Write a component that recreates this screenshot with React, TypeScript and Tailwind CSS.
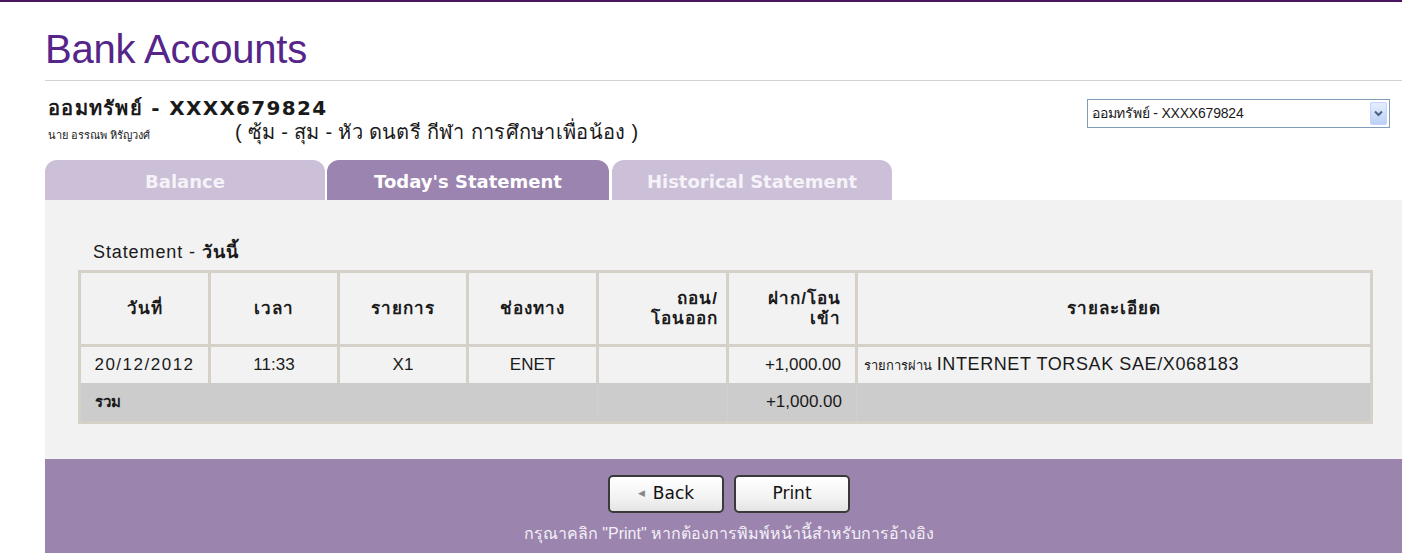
import React from "react";

const thai = "font-['Liberation_Sans','Noto_Sans',sans-serif]";

const rows = [
  {
    date: "20/12/2012",
    time: "11:33",
    code: "X1",
    channel: "ENET",
    withdraw: "",
    deposit: "+1,000.00",
    detail: "รายการผ่าน",
    detailEn: "INTERNET TORSAK SAE/X068183",
  },
];

export default function App() {
  return (
    <div className={`min-h-[553px] w-full overflow-hidden bg-white border-t-2 border-[#4a1560] text-[#1a1a1a] ${thai}`}>
      <div className="pl-[45px]">
        {/* page title */}
        <h1 className="h-[78px] pt-[25px] text-[40px] leading-[44px] tracking-[-0.2px] text-[#55258a] font-['Liberation_Sans',sans-serif]">
          Bank Accounts
        </h1>
        <div className="border-t border-[#d2d2d2]" />

        <div className="w-[1368px]">
          {/* account header */}
          <div className="flex justify-between items-start pt-[16px] h-[79px]">
            <div className="pl-[3px]">
              <div className="text-[20px] leading-[23px] font-bold font-['DejaVu_Sans',sans-serif] tracking-[1.3px]">
                ออมทรัพย์ - XXXX679824
              </div>
              <div className="flex items-baseline mt-[1px]">
                <span className="text-[11px] leading-[20px] w-[187px]">นาย อรรณพ หิรัญวงศ์</span>
                <span className="text-[20px] leading-[22px] tracking-[0.3px]">( ซุ้ม - สุม - หัว ดนตรี กีฬา การศึกษาเพื่อน้อง )</span>
              </div>
            </div>

            <div className="mr-[23px] mt-[2px] w-[303px] h-[29px] border border-[#7f9db9] bg-white flex items-center justify-between pl-[4px] pr-[2px]">
              <span className="text-[14px] tracking-[-0.2px]">ออมทรัพย์ - XXXX679824</span>
              <div className="w-[17px] h-[23px] rounded-[2px] border border-[#c3d3fd] bg-[linear-gradient(#e6eefc,#bcd0f5)] flex items-center justify-center">
                <svg width="9" height="7" viewBox="0 0 9 7">
                  <path d="M1 1.5 L4.5 5 L8 1.5" stroke="#4d6185" strokeWidth="2" fill="none" />
                </svg>
              </div>
            </div>
          </div>

          {/* tabs */}
          <div className="flex gap-[2px] h-[40px] font-['DejaVu_Sans',sans-serif] font-bold text-[18px]">
            <div className="w-[280px] pt-[2px] rounded-t-[12px] bg-[#cbc0d8] text-[#f5f2f8] flex items-center justify-center">
              Balance
            </div>
            <div className="w-[282px] pt-[2px] rounded-t-[12px] bg-[#9b84b0] text-white flex items-center justify-center">
              Today's Statement
            </div>
            <div className="ml-[1px] w-[280px] pt-[2px] rounded-t-[12px] bg-[#cbc0d8] text-[#f5f2f8] flex items-center justify-center">
              Historical Statement
            </div>
          </div>

          {/* panel */}
          <div className="bg-[#f2f2f2] h-[259px] pt-[40px] pl-[33px]">
            <div className="pl-[15px] text-[18px] leading-[24px] tracking-[0.9px]">
              Statement - <span className="font-bold">วันนี้</span>
            </div>
            <table className="mt-[6px] w-[1295px] border-collapse border-[3px] border-[#d5d1c9] text-[17px]">
              <thead>
                <tr className="h-[74px] text-[17px] font-bold tracking-[1px]">
                  <th className="w-[130px] border-[3px] border-[#d5d1c9] text-center">วันที่</th>
                  <th className="w-[129px] border-[3px] border-[#d5d1c9] text-center">เวลา</th>
                  <th className="w-[129px] border-[3px] border-[#d5d1c9] text-center">รายการ</th>
                  <th className="w-[130px] border-[3px] border-[#d5d1c9] text-center">ช่องทาง</th>
                  <th className="w-[130px] border-[3px] border-[#d5d1c9] text-right pr-[8px] leading-[20px]">
                    ถอน/
                    <br />
                    โอนออก
                  </th>
                  <th className="w-[129px] border-[3px] border-[#d5d1c9] text-right pr-[14px] leading-[20px]">
                    ฝาก/โอน
                    <br />
                    เข้า
                  </th>
                  <th className="border-[3px] border-[#d5d1c9] text-center">รายละเอียด</th>
                </tr>
              </thead>
              <tbody>
                {rows.map((r) => (
                  <tr key={r.date} className="h-[37px]">
                    <td className="border-x-[3px] border-[#d5d1c9] text-center tracking-[1.5px]">{r.date}</td>
                    <td className="border-x-[3px] border-[#d5d1c9] text-center">{r.time}</td>
                    <td className="border-x-[3px] border-[#d5d1c9] text-center">{r.code}</td>
                    <td className="border-x-[3px] border-[#d5d1c9] text-center">{r.channel}</td>
                    <td className="border-x-[3px] border-[#d5d1c9] text-right pr-[14px]">{r.withdraw}</td>
                    <td className="border-x-[3px] border-[#d5d1c9] text-right pr-[14px]">{r.deposit}</td>
                    <td className="border-x-[3px] border-[#d5d1c9] pl-[6px]">
                      <span className="text-[13px]">{r.detail}</span>{" "}
                      <span className="text-[18px] tracking-[0.6px]">{r.detailEn}</span>
                    </td>
                  </tr>
                ))}
                <tr className="h-[40px] bg-[#cccccc]">
                  <td colSpan={4} className="pl-[14px] font-bold text-[15px]">รวม</td>
                  <td className="border-x border-[#d0d0d0]"></td>
                  <td className="border-x border-[#d0d0d0] text-right pr-[14px]">+1,000.00</td>
                  <td></td>
                </tr>
              </tbody>
            </table>
          </div>

          {/* footer */}
          <div className="bg-[#9b84ae] h-[94px] pt-[16px] flex flex-col items-center">
            <div className="flex gap-[10px]">
              <button className="w-[116px] h-[38px] rounded-[5px] border-2 border-[#3a3a3a] bg-[linear-gradient(#ffffff,#f3f3f3_60%,#e4e4e4)] flex items-center justify-center gap-[8px] text-[17px] text-[#111] font-['DejaVu_Sans',sans-serif]">
                <span className="text-[9px] text-[#888]">◀</span>
                Back
              </button>
              <button className="w-[116px] h-[38px] rounded-[5px] border-2 border-[#3a3a3a] bg-[linear-gradient(#ffffff,#f3f3f3_60%,#e4e4e4)] flex items-center justify-center text-[17px] text-[#111] font-['DejaVu_Sans',sans-serif]">
                Print
              </button>
            </div>
            <div className="mt-[9px] text-[16px] text-[#f4f0f8]">
              กรุณาคลิก "Print" หากต้องการพิมพ์หน้านี้สำหรับการอ้างอิง
            </div>
          </div>
        </div>
      </div>
    </div>
  );
}
